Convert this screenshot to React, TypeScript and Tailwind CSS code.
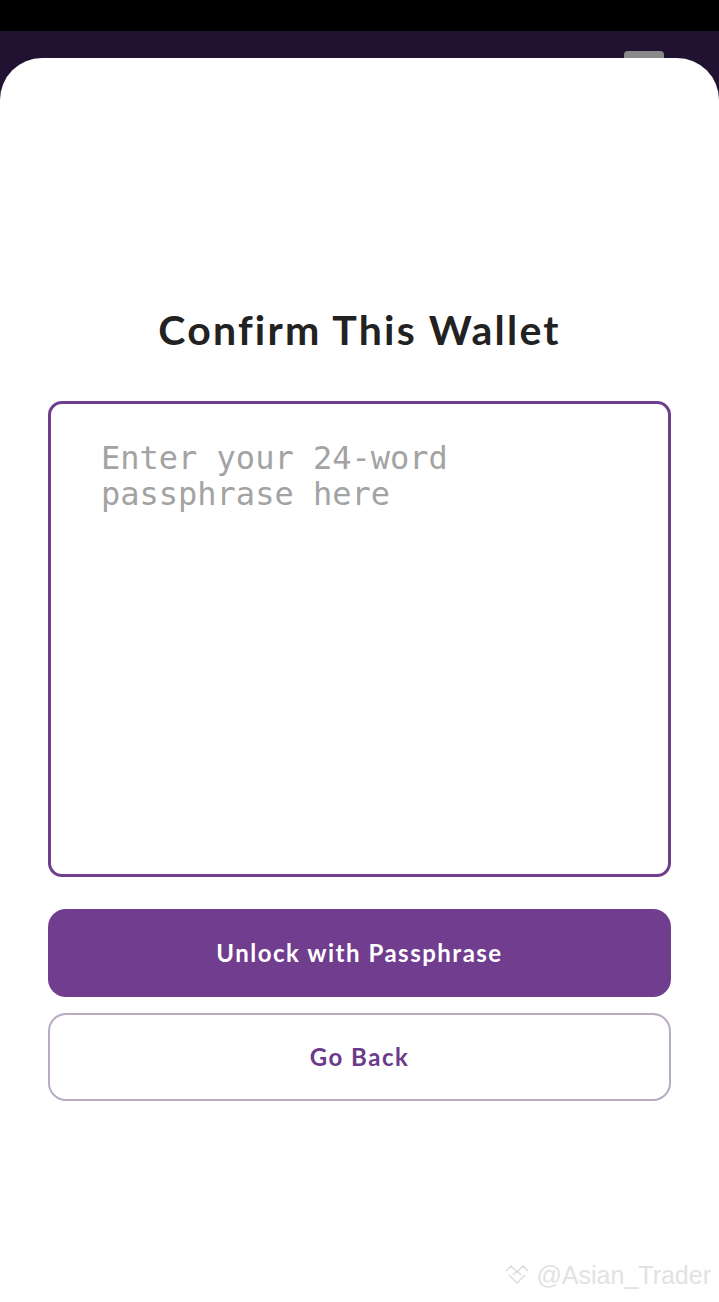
import React from "react";

export default function App() {
  return (
    <div className="w-[719px] h-[1302px] bg-black flex flex-col overflow-hidden" style={{ fontFamily: "Lato, 'Noto Sans', sans-serif" }}>
      <div className="h-[31px] bg-black shrink-0" />
      <div className="relative flex-1 bg-[#221232] flex flex-col">
        <div className="absolute right-[55px] top-[20px] w-[40px] h-[12px] rounded-[4px] bg-[#8a8a8a]" />
        <div className="relative mt-[27px] flex-1 bg-white rounded-t-[42px] flex flex-col items-center px-[48px]">
          <h1 className="mt-[247px] text-[41px] leading-[50px] font-bold text-[#222222] tracking-[2.2px]">Confirm This Wallet</h1>
          <textarea
            className="mt-[46px] w-full h-[476px] border-[3px] border-[#6f3f8d] rounded-[14px] pt-[36px] pl-[50px] pr-[20px] resize-none outline-none text-[32px] leading-[36px] text-[#333] placeholder:text-[#a3a3a3]"
            style={{ fontFamily: "'DejaVu Sans Mono', monospace" }}
            placeholder="Enter your 24-word passphrase here"
          />
          <button className="mt-[32px] w-full h-[88px] rounded-[18px] bg-[#713d8f] text-white text-[24px] font-bold tracking-[1.5px]">
            Unlock with Passphrase
          </button>
          <button className="mt-[16px] w-full h-[88px] rounded-[18px] border-2 border-[#b9abc2] bg-white text-[#6b3a8a] text-[24px] font-bold tracking-[1.5px]">
            Go Back
          </button>
          <div className="absolute right-[8px] bottom-[8px] flex items-center gap-[6px] text-[#e2e2e2] text-[25px]" style={{ fontFamily: "'Liberation Sans', sans-serif" }}>
            <svg width="26" height="22" viewBox="0 0 26 22" fill="none" stroke="#dcdcdc" strokeWidth="1.5">
              <path d="M2 7 L7 2 L13 8 L19 2 L24 7" />
              <path d="M5 11 L13 19 L21 11" />
              <path d="M9 11 L13 7 L17 11" />
            </svg>
            <span>@Asian_Trader</span>
          </div>
        </div>
      </div>
    </div>
  );
}
